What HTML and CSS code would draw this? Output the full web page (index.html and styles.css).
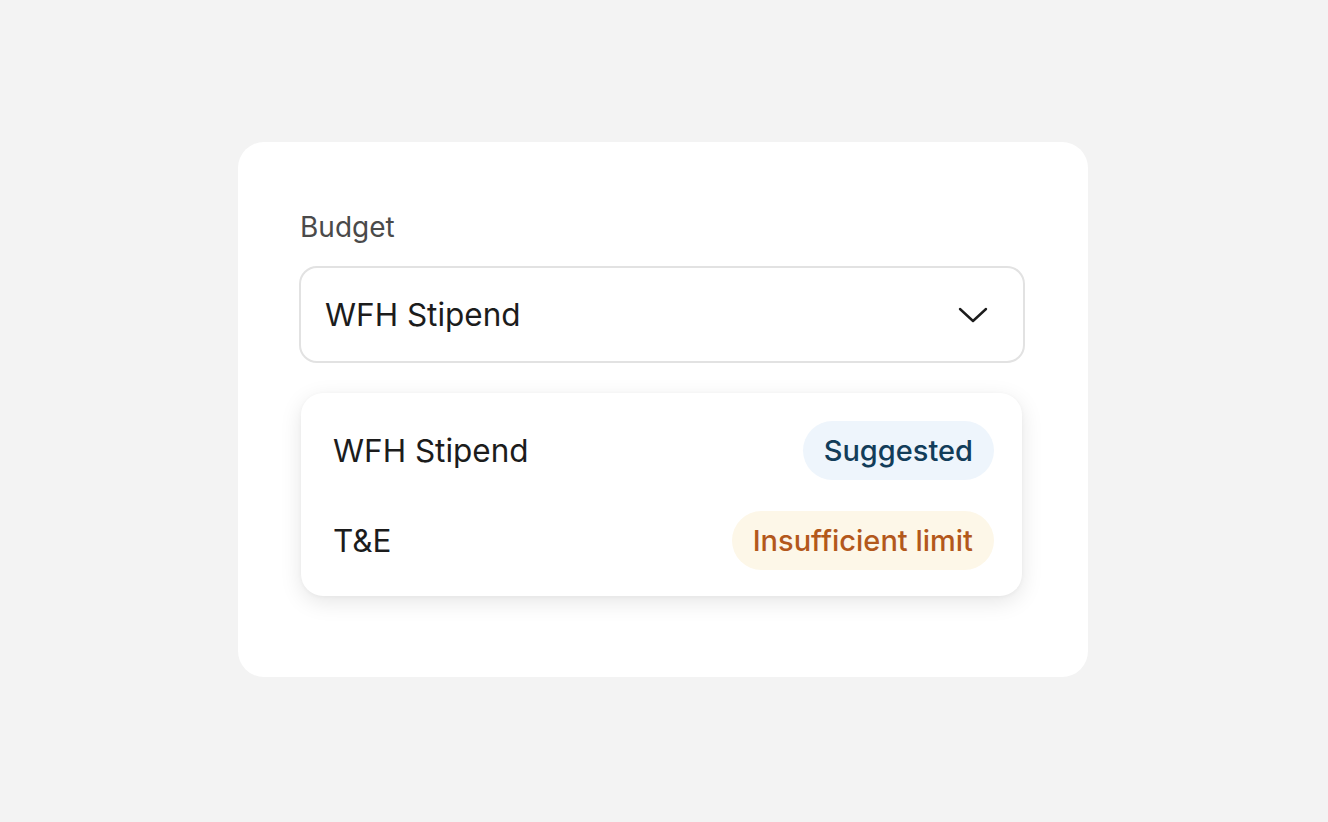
FILE: index.html
```html
<!DOCTYPE html>
<html lang="en">
<head>
<meta charset="utf-8">
<title>Budget</title>
<link rel="stylesheet" href="styles.css">
</head>
<body>
  <div class="card">
    <div class="label">Budget</div>
    <div class="select">
      <span class="select-value">WFH Stipend</span>
      <svg class="chevron" width="30" height="16" viewBox="0 0 30 16" fill="none">
        <path d="M2 2 L15 14 L28 2" stroke="#1c1c1c" stroke-width="2.4" stroke-linecap="round" stroke-linejoin="round"/>
      </svg>
    </div>
    <div class="menu">
      <div class="option">
        <span class="option-name">WFH Stipend</span>
        <span class="badge badge-suggested">Suggested</span>
      </div>
      <div class="option">
        <span class="option-name">T&amp;E</span>
        <span class="badge badge-warn">Insufficient limit</span>
      </div>
    </div>
  </div>
</body>
</html>
```

FILE: styles.css
```css
* { box-sizing: border-box; }

html, body {
  margin: 0;
  padding: 0;
}

body {
  background: #f3f3f3;
  font-family: Inter, "Noto Sans", sans-serif;
  min-height: 822px;
  display: flex;
  align-items: flex-start;
  justify-content: center;
  padding: 142px 2px 0 0;
}

.card {
  width: 850px;
  background: #ffffff;
  border-radius: 26px;
  padding: 69px 63px 81px 61px;
  display: flex;
  flex-direction: column;
}

.label {
  font-size: 28px;
  line-height: 32px;
  color: #4a4a4a;
  font-weight: 400;
  margin-bottom: 23px;
  padding-left: 1px;
}

.select {
  height: 97px;
  border: 2px solid #e2e2e2;
  border-radius: 18px;
  display: flex;
  align-items: center;
  justify-content: space-between;
  padding: 0 35px 0 24px;
}

.select-value {
  font-size: 31.5px;
  color: #1c1c1c;
}

.chevron {
  display: block;
}

.menu {
  margin: 30px 3px 0 2px;
  background: #ffffff;
  border-radius: 22px;
  box-shadow: 0 6px 22px rgba(0, 0, 0, 0.10), 0 1px 4px rgba(0, 0, 0, 0.04);
  padding: 28px 28px 26px 32px;
  display: flex;
  flex-direction: column;
  gap: 31px;
}

.option {
  height: 59px;
  display: flex;
  align-items: center;
  justify-content: space-between;
}

.option-name {
  font-size: 31.5px;
  color: #1c1c1c;
}

.badge {
  height: 59px;
  border-radius: 30px;
  padding: 0 21px;
  display: flex;
  align-items: center;
  font-size: 29px;
  font-weight: 500;
}

.badge-suggested {
  background: #eef5fc;
  color: #123d5a;
}

.badge-warn {
  background: #fdf7e8;
  color: #b3581b;
}
```
